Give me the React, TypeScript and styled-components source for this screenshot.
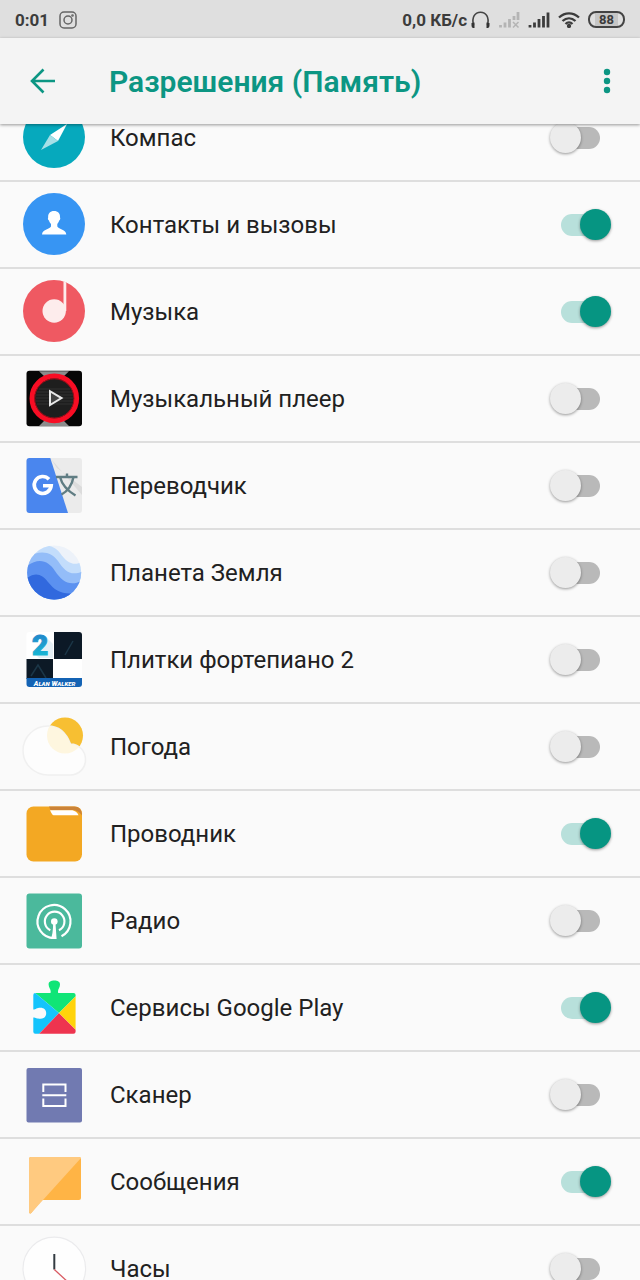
import React, { useId, useState } from "react";
import styled, { createGlobalStyle } from "styled-components";

const GlobalStyle = createGlobalStyle`
  * { box-sizing: border-box; }
  body {
    margin: 0;
    background: #fafafa;
    font-family: Roboto, "Noto Sans", sans-serif;
    color: #212121;
  }
`;

const Screen = styled.div`
  display: flex;
  flex-direction: column;
  height: 100vh;
  overflow: hidden;
`;

const StatusBar = styled.div`
  display: flex;
  flex: none;
  align-items: center;
  justify-content: space-between;
  height: 38px;
  padding: 1px 15px 0;
  background: #dfdfdf;
  color: #3c3c3c;
  font-size: 17px;
  font-weight: 700;
  line-height: 24px;
`;

const StatusGroup = styled.div<{ $gap: number }>`
  display: flex;
  align-items: center;
  gap: ${({ $gap }) => $gap}px;

  svg { display: block; }
`;

const AppBar = styled.header`
  position: relative;
  z-index: 1;
  display: flex;
  flex: none;
  align-items: center;
  height: 86px;
  padding: 0 16px 0 23px;
  background: #f4f4f4;
  box-shadow: 0 1px 3px rgba(0, 0, 0, 0.4);
`;

const Title = styled.h1`
  flex: 1;
  margin: 0 0 0 46px;
  padding-top: 2px;
  color: #0c9683;
  font-size: 30px;
  font-weight: 600;
  line-height: 40px;
`;

const IconButton = styled.button<{ $width: number }>`
  display: flex;
  align-items: center;
  justify-content: center;
  width: ${({ $width }) => $width}px;
  height: 48px;
  padding: 0;
  border: 0;
  background: none;
  color: #0c9683;
`;

const Viewport = styled.main`
  flex: 1;
  min-height: 0;
  overflow: hidden;
`;

const List = styled.ul`
  margin: -29px 0 0;
  padding: 0;
  list-style: none;
`;

const Row = styled.li`
  display: flex;
  align-items: center;
  gap: 24px;
  height: 87px;
  padding: 0 29px 1px 22px;
  border-bottom: 2px solid #dedede;
`;

const AppIcon = styled.svg`
  flex: none;
  display: block;
  width: 64px;
  height: 64px;
  overflow: visible;
`;

const AppName = styled.label`
  flex: 1;
  padding-top: 2px;
  font-size: 24px;
  line-height: 32px;
`;

const Switch = styled.input`
  appearance: none;
  position: relative;
  flex: none;
  width: 62px;
  height: 32px;
  margin: 0;

  &::before {
    content: "";
    position: absolute;
    top: 6px;
    left: 12px;
    width: 39px;
    height: 22px;
    border-radius: 11px;
    background: #b9b9b9;
  }

  &::after {
    content: "";
    position: absolute;
    top: 1px;
    left: 1px;
    width: 31px;
    height: 31px;
    border-radius: 50%;
    background: #ececec;
    box-shadow: 0 1px 3px rgba(0, 0, 0, 0.4);
  }

  &:checked::before { background: #b8e0db; }
  &:checked::after {
    left: 31px;
    background: #069582;
  }
`;

const Compass = () => (
  <>
    <circle cx="32" cy="32" r="31" fill="#06a9bd" />
    <path d="M45 19L28 30L36 36Z" fill="#fff" />
    <path d="M19 45L28 30L36 36Z" fill="#a6e0e7" />
  </>
);

const Contacts = () => (
  <>
    <circle cx="32" cy="32" r="31" fill="#3795f3" />
    <path
      d="M32 19C36 19 38.4 21.500 38 25.500C38.600 26 38.200 28 37.200 28.500C36.800 30 36 31 35.300 32V34.500C37 37.500 44 37.500 44.300 42.500H20C20.300 37.500 27.300 37.500 29 34.500V32C28.200 31 27.300 30 27 28.500C26 28 25.600 26 26.200 25.500C25.800 21.500 28.200 19 32 19Z"
      fill="#fff"
    />
  </>
);

const Music = () => (
  <>
    <circle cx="32" cy="32" r="31" fill="#ef5962" />
    <circle cx="32.200" cy="32" r="11.700" fill="#fdecec" />
    <path d="M41.500 2.200L44.300 3.400V32H41.500Z" fill="#fdecec" />
  </>
);

const Player = () => (
  <>
    <rect x="4.500" y="4.800" width="55.500" height="55.500" rx="3" fill="#060606" />
    <path d="M17 5.200H47L42 10H22ZM17 60L22 55H42L47 60Z" fill="#8b8b8b" />
    <circle cx="32.300" cy="32.400" r="22.300" fill="#1e1e1e" stroke="#f80d24" strokeWidth="5" />
    <circle cx="32.300" cy="32.400" r="19.600" fill="none" stroke="#a00d18" strokeWidth="1" />
    <path d="M15 26H50M14 29H51M14 32H51M14 35H51M15 38H50M17 23H48" stroke="#303030" strokeWidth="1" />
    <path d="M28 25.200V39L39.500 32.100Z" fill="#444" stroke="#e8e8e8" strokeWidth="2" />
  </>
);

const Translate = () => (
  <>
    <rect x="4.500" y="5" width="55.500" height="55" rx="3" fill="#ebebeb" />
    <path d="M28.300 5L60 42V34L35 15Z" fill="#dcdcdc" />
    <path d="M7.500 5H28.300L46 60H7.500Q4.500 60 4.500 57V8Q4.500 5 7.500 5Z" fill="#4a86ee" />
    <path
      d="M27 26.200A8.500 8.500 0 1 0 29.200 32.800H21"
      fill="none"
      stroke="#fff"
      strokeWidth="3.600"
    />
    <path
      d="M34 24H55.500M45 20.500V24M38 24C40 32 46 38 53.500 42.500M51.500 24C50 32 46 38 39.500 41.500"
      fill="none"
      stroke="#607d83"
      strokeWidth="2.400"
    />
  </>
);

const Earth = () => (
  <>
    <clipPath id="globe"><circle cx="32.200" cy="32.500" r="27" /></clipPath>
    <g clipPath="url(#globe)">
      <path d="M0 0H64V64H0Z" fill="#edf2f9" />
      <path d="M0 14C18 2 31 4 38 13C45 23 52 27 62 21V64H0Z" fill="#c3ddfb" />
      <path d="M0 22C15 8 29 11 36 21C43 32 51 38 64 29V64H0Z" fill="#94bdf8" />
      <path d="M0 30C15 16 26 20 33 31C41 43 50 48 64 38V64H0Z" fill="#5b91f0" />
      <path d="M0 42C12 31 19 33 26 42C34 52 42 56 60 52V64H0Z" fill="#3169de" />
    </g>
  </>
);

const PianoTiles = () => (
  <>
    <clipPath id="tiles"><rect x="4.500" y="5" width="55.500" height="55" rx="3" /></clipPath>
    <linearGradient id="two" x1="0" y1="0" x2="0" y2="1">
      <stop offset="0" stopColor="#247bc9" />
      <stop offset="1" stopColor="#16c5d6" />
    </linearGradient>
    <g clipPath="url(#tiles)">
      <path d="M4 4H61V61H4Z" fill="#fff" />
      <path d="M32 4H61V32H32ZM4 32H31V52H4Z" fill="#0c1926" />
      <path d="M51 14L43 28M9 49L16 38L24 51" stroke="#1b3647" strokeWidth="1.500" fill="none" />
      <path d="M25 11L31 17V31H17L14 28Z" fill="#e5eff5" />
      <path d="M4 51H61V61H4Z" fill="#1463b4" />
    </g>
    <text x="18" y="28" textAnchor="middle" fontSize="28" fontWeight="900" fill="url(#two)" stroke="url(#two)">2</text>
    <text x="32.500" y="58.500" textAnchor="middle" fontSize="7" fontWeight="900" fontStyle="italic" fill="#fff">
      A<tspan fontSize="6">LAN</tspan> W<tspan fontSize="6">ALKER</tspan>
    </text>
  </>
);

const CLOUD = "M26 12C36 12 44 18 48.500 30C57 30 63.500 37 63.500 45.500C63.500 54.500 57 61 48 61H26C12 61 1 50 1 36.500C1 23 12 12 26 12Z";

const Weather = () => (
  <>
    <clipPath id="cloud"><path d={CLOUD} /></clipPath>
    <circle cx="43" cy="21.500" r="18" fill="#f7bf32" />
    <path d={CLOUD} fill="#fdfdfd" stroke="#f0f0f0" strokeWidth="1.500" />
    <circle cx="43" cy="21.500" r="18" fill="#fef6df" clipPath="url(#cloud)" />
  </>
);

const Folder = () => (
  <>
    <rect x="4.500" y="5.500" width="55.500" height="55" rx="7" fill="#f3a823" />
    <path d="M27 5.500H52C57 5.500 60 8.500 60 14.500C57 10.500 54 9 50 9H28.500Z" fill="#cb8338" />
    <path d="M28 9.200H49C53 9.200 55.500 11.500 56.500 14.300H32.500C30 14.300 29.500 12 28 9.200Z" fill="#fff" />
  </>
);

const Radio = () => (
  <>
    <rect x="4.500" y="5.500" width="55.500" height="55" rx="3" fill="#4bb99c" />
    <g fill="none" stroke="#fff" strokeWidth="2.200">
      <path d="M32.300 50A16.500 16.500 0 1 1 39.500 48.200" />
      <path d="M28.300 42.300A9.800 9.800 0 1 1 37 42.300" />
    </g>
    <circle cx="32.300" cy="33.500" r="3.300" fill="#fff" />
    <path d="M31.200 34H33.400L34.600 51H28.500Q31 48 31.200 34Z" fill="#fff" />
  </>
);

const PlayServices = () => (
  <>
    <clipPath id="puzzle">
      <path d="M13.300 18H28.500C29.500 14.500 26.600 13 26.600 9.500C26.600 6.500 29 5.500 32.300 5.500C35.600 5.500 38 6.500 38 9.500C38 13 35.200 14.500 36.200 18H51.500Q53.600 18 53.600 20V56.700Q53.600 58.700 51.500 58.700H13.300Q11.300 58.700 11.300 56.700V42.500C14 42.500 14.500 43.800 18.500 43.800C22 43.800 24.200 41.500 24.200 38.200C24.200 35 22 32.800 18.500 32.800C14.500 32.800 14 34.500 11.300 34.500V20Q11.300 18 13.300 18Z" />
    </clipPath>
    <g clipPath="url(#puzzle)">
      <path d="M0 0H64V11L37 38L12 17Z" fill="#10e577" />
      <path d="M12 17L37 38L17 59H0V17Z" fill="#14c4fc" />
      <path d="M17 59L37 38L54 55V60H17Z" fill="#ee344f" />
      <path d="M37 38L56 19V57Z" fill="#ffd30b" />
    </g>
  </>
);

const Scanner = () => (
  <>
    <rect x="4.500" y="6" width="55.500" height="54.500" rx="2" fill="#717ab1" />
    <path d="M21.300 30V22.500H43.500V30M20.300 33.300H44.300M21.300 36.500V44H43.500V36.500" fill="none" stroke="#fff" strokeWidth="2" />
  </>
);

const Messages = () => (
  <>
    <path d="M9 8H57Q59 8 59 10V49Q59 51 57 51H20L9 64.300Q7 65 7 63V10Q7 8 9 8Z" fill="#ffb445" />
    <path d="M9 8H57Q58.500 8 59 9L9 64.300Q7 65 7 63V10Q7 8 9 8Z" fill="#ffca80" />
  </>
);

const Clock = () => (
  <>
    <circle cx="32.300" cy="32.500" r="31.300" fill="#fefefe" stroke="#ebebed" strokeWidth="1.200" />
    <path d="M32.300 18V33.500" stroke="#333b42" strokeWidth="2" />
    <path d="M32.300 33.500L47 47" stroke="#d95a62" strokeWidth="1.300" />
  </>
);

const APPS = [
  { name: "Компас", Icon: Compass, on: false },
  { name: "Контакты и вызовы", Icon: Contacts, on: true },
  { name: "Музыка", Icon: Music, on: true },
  { name: "Музыкальный плеер", Icon: Player, on: false },
  { name: "Переводчик", Icon: Translate, on: false },
  { name: "Планета Земля", Icon: Earth, on: false },
  { name: "Плитки фортепиано 2", Icon: PianoTiles, on: false },
  { name: "Погода", Icon: Weather, on: false },
  { name: "Проводник", Icon: Folder, on: true },
  { name: "Радио", Icon: Radio, on: false },
  { name: "Сервисы Google Play", Icon: PlayServices, on: true },
  { name: "Сканер", Icon: Scanner, on: false },
  { name: "Сообщения", Icon: Messages, on: true },
  { name: "Часы", Icon: Clock, on: false },
];

function PermissionRow({ name, Icon, on }: (typeof APPS)[number]) {
  const id = useId();
  const [checked, setChecked] = useState(on);
  return (
    <Row>
      <AppIcon viewBox="0 0 64 64" aria-hidden="true"><Icon /></AppIcon>
      <AppName htmlFor={id}>{name}</AppName>
      <Switch id={id} type="checkbox" checked={checked} onChange={(e) => setChecked(e.target.checked)} />
    </Row>
  );
}

const Instagram = () => (
  <svg width="18" height="18" viewBox="0 0 18 18" fill="none" stroke="#666" strokeWidth="1.500">
    <rect x="1" y="1" width="16" height="16" rx="4" />
    <circle cx="9" cy="9" r="4" />
    <circle cx="13.500" cy="4.500" r="0.600" />
  </svg>
);

const Headphones = () => (
  <svg width="19" height="18" viewBox="0 0 19 18">
    <path d="M2.500 14C0.500 6 4 1.200 9.500 1.200S18.500 6 16.500 14" fill="none" stroke="#444" strokeWidth="1.600" />
    <path d="M0.500 12L3.500 11.500V17H2Q0.500 16.500 0.500 14.500ZM18.500 12L15.500 11.500V17H17Q18.500 16.500 18.500 14.500Z" fill="#333" />
  </svg>
);

const Signal = ({ off = false }: { off?: boolean }) => (
  <svg width="22" height="16" viewBox="0 0 22 16" stroke={off ? "#b4b4b4" : "#3c3c3c"} strokeWidth="2.800" fill="none">
    {off ? (
      <>
        <path d="M2.500 15.500V13M7 15.500V10.500M11.500 15.500V7M16 8V4M20 8V0" />
        <path d="M15 10L20.500 15.500M20.500 10L15 15.500" strokeWidth="1.500" />
      </>
    ) : (
      <path d="M2 15.500V13M6.500 15.500V10.500M11 15.500V7M15.500 15.500V4M20 15.500V0.500" />
    )}
  </svg>
);

const Wifi = () => (
  <svg width="22" height="16" viewBox="0 0 22 16" fill="none" stroke="#3c3c3c" strokeWidth="2.300">
    <path d="M1 5.500C7 0 15 0 21 5.500M4.500 9C8.500 5.400 13.500 5.400 17.500 9M7.500 12C9.500 10 12.500 10 14.500 12" />
    <circle cx="11" cy="14" r="1" fill="#3c3c3c" />
  </svg>
);

const Battery = styled.span`
  display: flex;
  align-items: center;
  justify-content: center;
  width: 37px;
  height: 17px;
  border: 2px solid #444;
  border-radius: 8px;
  background: linear-gradient(90deg, #dfdfdf 5px, #c6c6c6 5px, #c6c6c6 28px, #dfdfdf 28px);
  font-size: 13px;
  line-height: 13px;
`;

export default function App() {
  return (
    <Screen>
      <GlobalStyle />
      <StatusBar>
        <StatusGroup $gap={10}>
          <span>0:01</span>
          <Instagram />
        </StatusGroup>
        <StatusGroup $gap={8}>
          <StatusGroup $gap={4}>
            <span>0,0 КБ/с</span>
            <Headphones />
          </StatusGroup>
          <Signal off />
          <Signal />
          <Wifi />
          <Battery>88</Battery>
        </StatusGroup>
      </StatusBar>
      <AppBar>
        <IconButton $width={40} aria-label="Назад">
          <svg width="26" height="26" viewBox="0 0 26 26" fill="none" stroke="currentColor" strokeWidth="2.600">
            <path d="M25 13H3M13.500 1.500L2 13L13.500 24.500" />
          </svg>
        </IconButton>
        <Title>Разрешения (Память)</Title>
        <IconButton $width={34} aria-label="Ещё">
          <svg width="8" height="26" viewBox="0 0 8 26" fill="currentColor">
            <circle cx="4" cy="4" r="3.200" />
            <circle cx="4" cy="13" r="3.200" />
            <circle cx="4" cy="22" r="3.200" />
          </svg>
        </IconButton>
      </AppBar>
      <Viewport>
        <List>
          {APPS.map((app) => <PermissionRow key={app.name} {...app} />)}
        </List>
      </Viewport>
    </Screen>
  );
}
